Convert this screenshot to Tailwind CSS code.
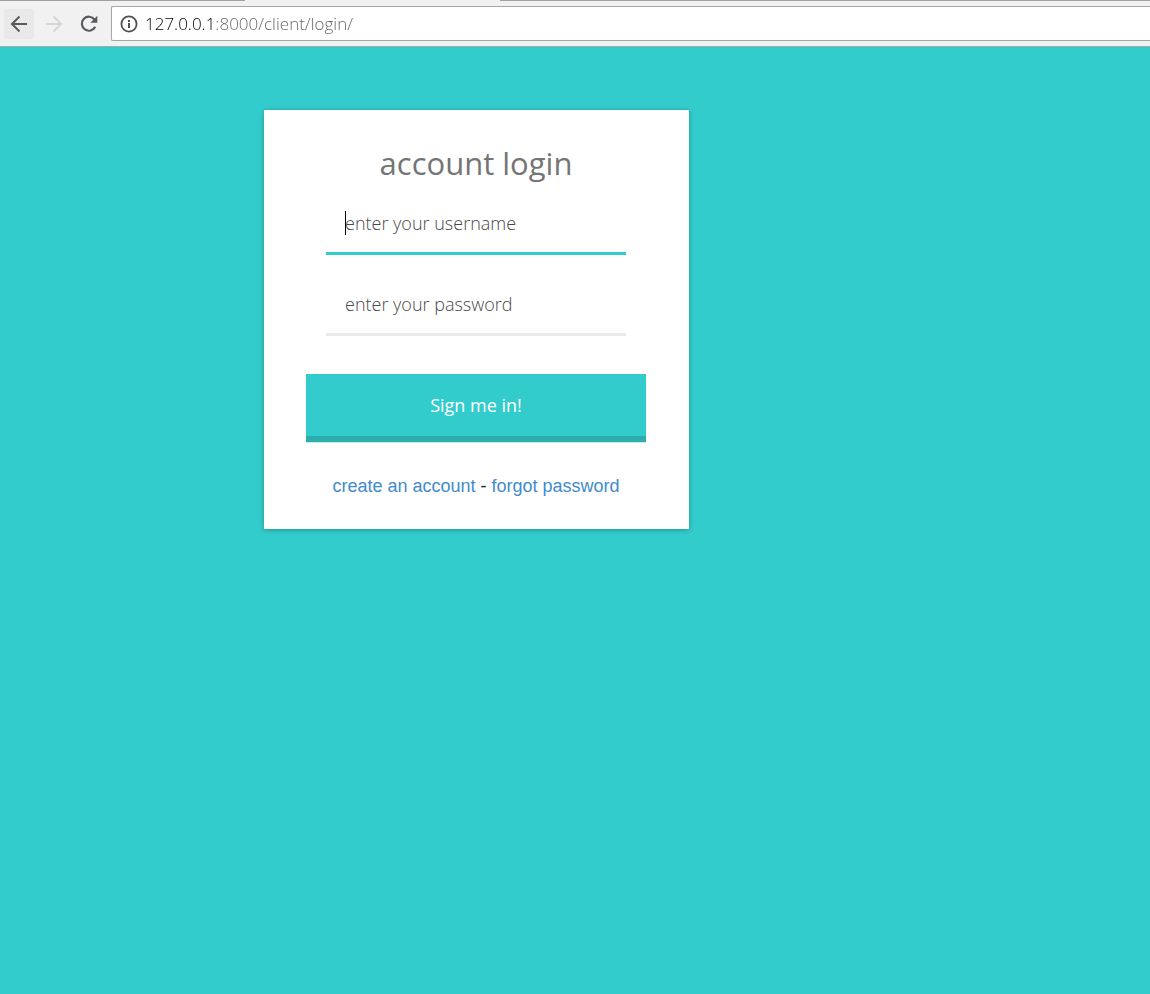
<!DOCTYPE html>
<html lang="en">
<head>
<meta charset="utf-8">
<meta name="viewport" content="width=device-width, initial-scale=1">
<title>account login</title>
<script src="https://cdn.jsdelivr.net/npm/@tailwindcss/browser@4"></script>
</head>
<body class="flex min-h-screen flex-col overflow-x-hidden bg-[#33cccc] font-['Open_Sans',sans-serif]">
  <header class="border-b border-[#a9a9a9] bg-[#f1f1f1]">
    <!-- lower edge of the tab strip, open under the active tab -->
    <div class="flex h-px justify-between">
      <div class="w-[245px] bg-[#a0a0a0]"></div>
      <div class="w-[255px]"></div>
      <div class="flex-1 bg-[#a0a0a0]"></div>
    </div>
    <nav class="flex items-center pt-[5px] pb-[5px] pl-1" aria-label="Browser">
      <button type="button" aria-label="Back" class="flex size-[30px] items-center justify-center rounded-xs bg-[#e9e9e9] text-[#5a5a5e]">
        <svg class="size-5" viewBox="0 0 20 20" fill="none" stroke="currentColor" stroke-width="2"><path d="M18 10H3M10.500 2.500L3 10l7.500 7.500"/></svg>
      </button>
      <button type="button" aria-label="Forward" class="ml-[5px] flex size-[30px] items-center justify-center text-[#d6d6d6]">
        <svg class="size-5" viewBox="0 0 20 20" fill="none" stroke="currentColor" stroke-width="2"><path d="M2 10h15M9.500 2.500L17 10l-7.500 7.500"/></svg>
      </button>
      <button type="button" aria-label="Reload" class="ml-[5px] flex size-[30px] items-center justify-center text-[#5a5a5e]">
        <svg class="size-5" viewBox="0 0 20 20"><path d="M16.200 12.800A7 7 0 1 1 15.500 5.500" fill="none" stroke="currentColor" stroke-width="2.200"/><path d="M18.300 1.700v7h-7z" fill="currentColor"/></svg>
      </button>
      <div class="ml-[7px] flex h-[35px] flex-1 items-center gap-[7px] rounded-l-xs border border-r-0 border-[#a6a6a6] bg-white pl-2">
        <svg class="size-[18px] shrink-0 text-[#505054]" viewBox="0 0 18 18" aria-hidden="true"><circle cx="9" cy="9" r="7.600" fill="none" stroke="currentColor" stroke-width="1.800"/><path d="M8 8h2v5H8zM8 5h2v2H8z" fill="currentColor"/></svg>
        <input type="text" aria-label="Address" value="127.0.0.1:8000/client/login/" class="min-w-0 flex-1 bg-[linear-gradient(90deg,#000_70px,#606060_70px)] bg-clip-text font-['Open_Sans',sans-serif] text-[17px] leading-6 font-light text-transparent outline-none">
      </div>
    </nav>
  </header>

  <main class="flex-1 px-4 pt-[63px] pb-10 sm:pl-66">
    <form class="w-full max-w-[425px] bg-white pr-[43px] pl-[42px] pt-[29px] pb-[29px] shadow-[0_1px_5px_rgba(0,0,0,0.3)]">
      <h1 class="text-center text-[31px] leading-12 font-normal text-[#757575]">account login</h1>
      <div class="mx-5 mt-px">
        <div class="relative">
          <input type="text" aria-label="Username" placeholder="enter your username" class="block h-[67px] w-full border-b-3 border-[#33cccc] px-[19px] pt-[6px] text-lg font-light outline-none placeholder:text-[#484848]">
          <span class="absolute top-[23px] left-[19px] h-6 w-px bg-black"></span>
        </div>
        <input type="password" aria-label="Password" placeholder="enter your password" class="mt-[14px] block h-[67px] w-full border-b-3 border-[#eaeaea] px-[19px] pt-[6px] text-lg font-light outline-none placeholder:text-[#484848]">
      </div>
      <button type="submit" class="mt-[38px] h-[68px] w-full border-b-6 border-[#2dadad] bg-[#33cccc] text-lg text-white shadow-[0_1px_0_#c5eeee]">Sign me in!</button>
      <p class="mt-[31px] text-center font-['Liberation_Sans',Arial,sans-serif] text-lg leading-[27px] text-[#222]"><a href="#" class="text-[#428bca]">create an account</a> - <a href="#" class="text-[#428bca]">forgot password</a></p>
    </form>
  </main>
</body>
</html>
